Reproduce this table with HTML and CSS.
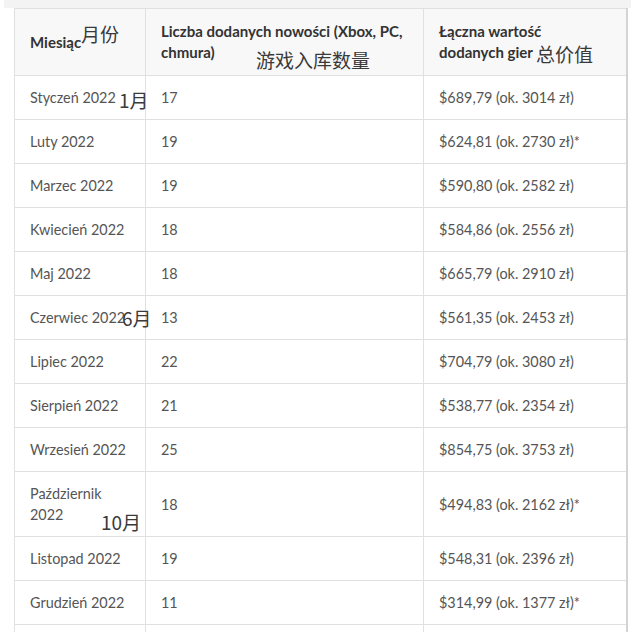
FILE: index.html
```html
<!DOCTYPE html>
<html lang="pl">
<head>
<meta charset="utf-8">
<link rel="stylesheet" href="styles.css">
</head>
<body>
<div class="strip"></div>
<div class="wrap">
  <table class="games">
    <thead>
      <tr>
        <th class="c1">Miesiąc</th>
        <th class="c2">Liczba dodanych nowości (Xbox, PC, chmura)</th>
        <th class="c3">Łączna wartość<br>dodanych gier</th>
      </tr>
    </thead>
    <tbody>
      <tr><td>Styczeń 2022</td><td>17</td><td>$689,79 (ok. 3014 zł)</td></tr>
      <tr><td>Luty 2022</td><td>19</td><td>$624,81 (ok. 2730 zł)*</td></tr>
      <tr><td>Marzec 2022</td><td>19</td><td>$590,80 (ok. 2582 zł)</td></tr>
      <tr><td>Kwiecień 2022</td><td>18</td><td>$584,86 (ok. 2556 zł)</td></tr>
      <tr><td>Maj 2022</td><td>18</td><td>$665,79 (ok. 2910 zł)</td></tr>
      <tr><td>Czerwiec 2022</td><td>13</td><td>$561,35 (ok. 2453 zł)</td></tr>
      <tr><td>Lipiec 2022</td><td>22</td><td>$704,79 (ok. 3080 zł)</td></tr>
      <tr><td>Sierpień 2022</td><td>21</td><td>$538,77 (ok. 2354 zł)</td></tr>
      <tr><td>Wrzesień 2022</td><td>25</td><td>$854,75 (ok. 3753 zł)</td></tr>
      <tr><td>Październik 2022</td><td>18</td><td>$494,83 (ok. 2162 zł)*</td></tr>
      <tr><td>Listopad 2022</td><td>19</td><td>$548,31 (ok. 2396 zł)</td></tr>
      <tr><td>Grudzień 2022</td><td>11</td><td>$314,99 (ok. 1377 zł)*</td></tr>
      <tr class="tail"><td></td><td></td><td></td></tr>
    </tbody>
  </table>
  <span class="note n-month">月份</span>
  <span class="note n-count">游戏入库数量</span>
  <span class="note n-value">总价值</span>
  <span class="note n-jan">1月</span>
  <span class="note n-jun">6月</span>
  <span class="note n-oct">10月</span>
</div>
</body>
</html>
```
FILE: styles.css
```css
html, body {
  margin: 0;
  padding: 0;
  background: #ffffff;
  overflow: hidden;
}
body {
  width: 631px;
  height: 632px;
  font-family: Lato, "Open Sans", sans-serif;
}
.strip {
  height: 8px;
  margin-left: 4px;
  background: #f3f3f3;
}
.wrap {
  position: relative;
  padding-left: 14px;
}
.games {
  border-collapse: collapse;
  table-layout: fixed;
  width: 612px;
  font-size: 14.4px;
  line-height: 21px;
  color: #555555;
  border-right: 2px solid #d4d4d4;
}
.games th, .games td {
  box-sizing: border-box;
  border: 1px solid #e0e0e0;
  text-align: left;
  vertical-align: middle;
  padding: 11px 12px 11px 15px;
}
.games th {
  background: #f8f8f8;
  color: #333333;
  font-size: 15px;
  font-weight: 700;
  padding-top: 12px;
  padding-bottom: 12px;
}
.tail td { height: 44px; }
.c1 { width: 131px; }
.c2 { width: 278px; }
.c3 { width: 203px; }
.note {
  position: absolute;
  font-family: "Noto Sans CJK SC", sans-serif;
  font-size: 19px;
  line-height: 1;
  color: #3a3a3a;
  white-space: nowrap;
}
.n-month { left: 81px; top: 16px; }
.n-count { left: 256px; top: 42px; }
.n-value { left: 536px; top: 36px; }
.n-jan { left: 119px; top: 82px; }
.n-jun { left: 122px; top: 300px; }
.n-oct { left: 101px; top: 504px; }
```
